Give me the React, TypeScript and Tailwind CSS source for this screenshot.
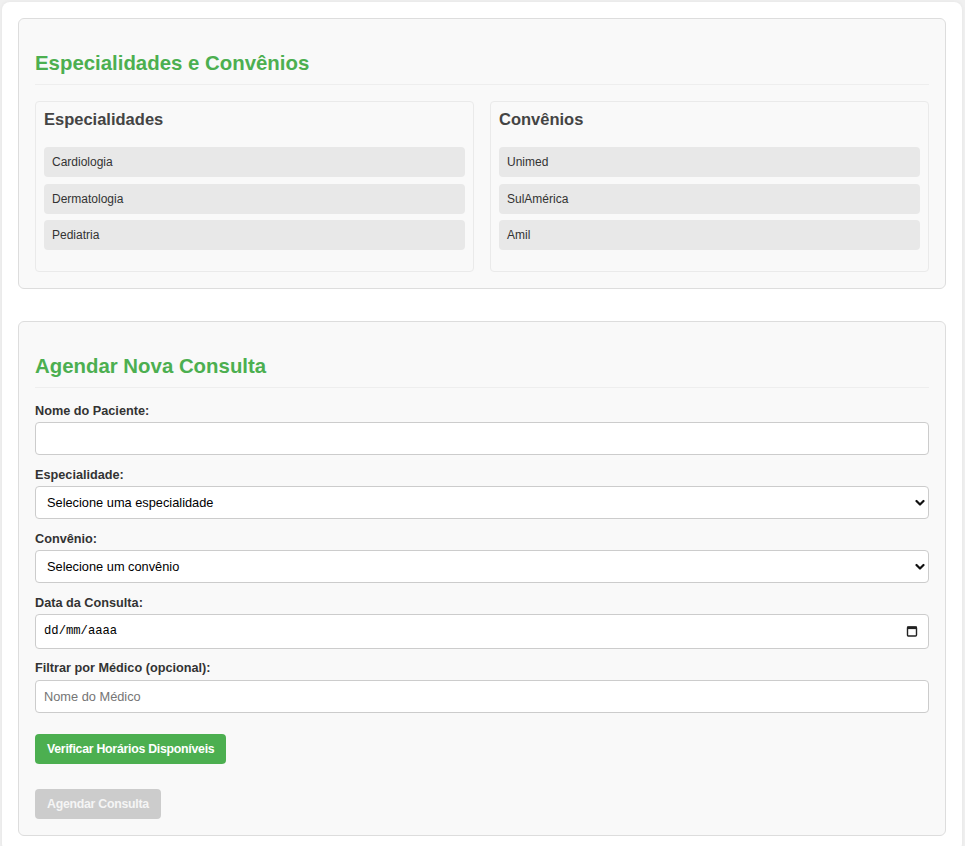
const especialidades = ["Cardiologia", "Dermatologia", "Pediatria"];
const convenios = ["Unimed", "SulAmérica", "Amil"];

function ListBox({ title, items }: { title: string; items: string[] }) {
  return (
    <div className="rounded-[4px] border border-[#eaeaea] bg-[#f9f9f9] p-[8px]">
      <h3 className="pt-[1px] text-[16.5px] font-bold leading-[16px] text-[#444]">{title}</h3>
      <ul className="mt-[20px] mb-[13px] flex flex-col gap-[6.5px]">
        {items.map((item) => (
          <li
            key={item}
            className="flex h-[30px] items-center rounded-[4px] bg-[#e8e8e8] px-[8px] text-[12px] text-[#333]"
          >
            {item}
          </li>
        ))}
      </ul>
    </div>
  );
}

function Card({ title, children }: { title: string; children: React.ReactNode }) {
  return (
    <section className="rounded-[6px] border border-[#ddd] bg-[#f9f9f9] p-[16px]">
      <h2 className="mt-[16px] mb-[16px] border-b border-[#eee] pb-[9px] text-[20.4px] font-bold leading-[24px] text-[#4caf50]">
        {title}
      </h2>
      {children}
    </section>
  );
}

function Label({ children, className = "mb-[3px]" }: { children: React.ReactNode; className?: string }) {
  return (
    <label className={`block text-[12.7px] font-bold leading-[15px] text-[#333] ${className}`}>{children}</label>
  );
}

function Chevron() {
  return (
    <svg
      className="pointer-events-none absolute right-[4px] top-1/2 -translate-y-1/2"
      width="10"
      height="7"
      viewBox="0 0 10 7"
      fill="none"
      stroke="#111"
      strokeWidth="2.2"
      strokeLinecap="round"
      strokeLinejoin="round"
    >
      <path d="M1.5 1.5 5 5 8.5 1.5" />
    </svg>
  );
}

function SelectField({ text }: { text: string }) {
  return (
    <div className="relative mb-[13px]">
      <select className="h-[33px] w-full appearance-none rounded-[4px] border border-[#ccc] bg-white pl-[11px] text-[12.8px] text-black outline-none">
        <option>{text}</option>
      </select>
      <Chevron />
    </div>
  );
}

export default function App() {
  return (
    <div className="min-h-screen bg-[#f0f0f0] pt-[2px] font-['Liberation_Sans',Arial,sans-serif]">
      <div className="ml-[2px] w-[960px] rounded-[8px] bg-white p-[16px] shadow-[0_0_4px_rgba(0,0,0,0.05)]">
        <Card title="Especialidades e Convênios">
          <div className="grid grid-cols-2 gap-[16px]">
            <ListBox title="Especialidades" items={especialidades} />
            <ListBox title="Convênios" items={convenios} />
          </div>
        </Card>

        <div className="mt-[32px]">
          <Card title="Agendar Nova Consulta">
            <Label>Nome do Paciente:</Label>
            <input
              type="text"
              className="mb-[13px] block h-[33px] w-full rounded-[4px] border border-[#ccc] bg-white px-[8px] text-[12.8px] outline-none"
            />

            <Label>Especialidade:</Label>
            <SelectField text="Selecione uma especialidade" />

            <Label>Convênio:</Label>
            <SelectField text="Selecione um convênio" />

            <Label>Data da Consulta:</Label>
            <div className="mb-[12px] flex h-[34.5px] items-center justify-between rounded-[4px] border border-[#ccc] bg-white pl-[8px] pr-[10px]">
              <span className="font-['Liberation_Mono',monospace] text-[12.2px] text-black">dd/mm/aaaa</span>
              <svg width="12" height="12" viewBox="0 0 12 12" fill="none">
                <rect x="1.5" y="2" width="9" height="9" rx="1" stroke="#222" strokeWidth="1.4" />
                <rect x="1" y="1.5" width="10" height="2.6" fill="#222" />
              </svg>
            </div>

            <Label className="mb-[4.5px]">Filtrar por Médico (opcional):</Label>
            <input
              type="text"
              placeholder="Nome do Médico"
              className="mb-[21px] block h-[32.5px] w-full rounded-[4px] border border-[#ccc] bg-white px-[8px] text-[12.8px] outline-none placeholder:text-[#757575]"
            />

            <div className="mb-[24.5px]">
              <button className="h-[30.5px] rounded-[4px] bg-[#4caf50] px-[12px] text-[12.3px] font-bold tracking-[-0.25px] text-white">
                Verificar Horários Disponíveis
              </button>
            </div>
            <div>
              <button
                disabled
                className="h-[30.5px] rounded-[4px] bg-[#ccc] px-[12px] text-[12.3px] font-bold tracking-[-0.25px] text-[#f5f5f5]"
              >
                Agendar Consulta
              </button>
            </div>
          </Card>
        </div>
      </div>
    </div>
  );
}
